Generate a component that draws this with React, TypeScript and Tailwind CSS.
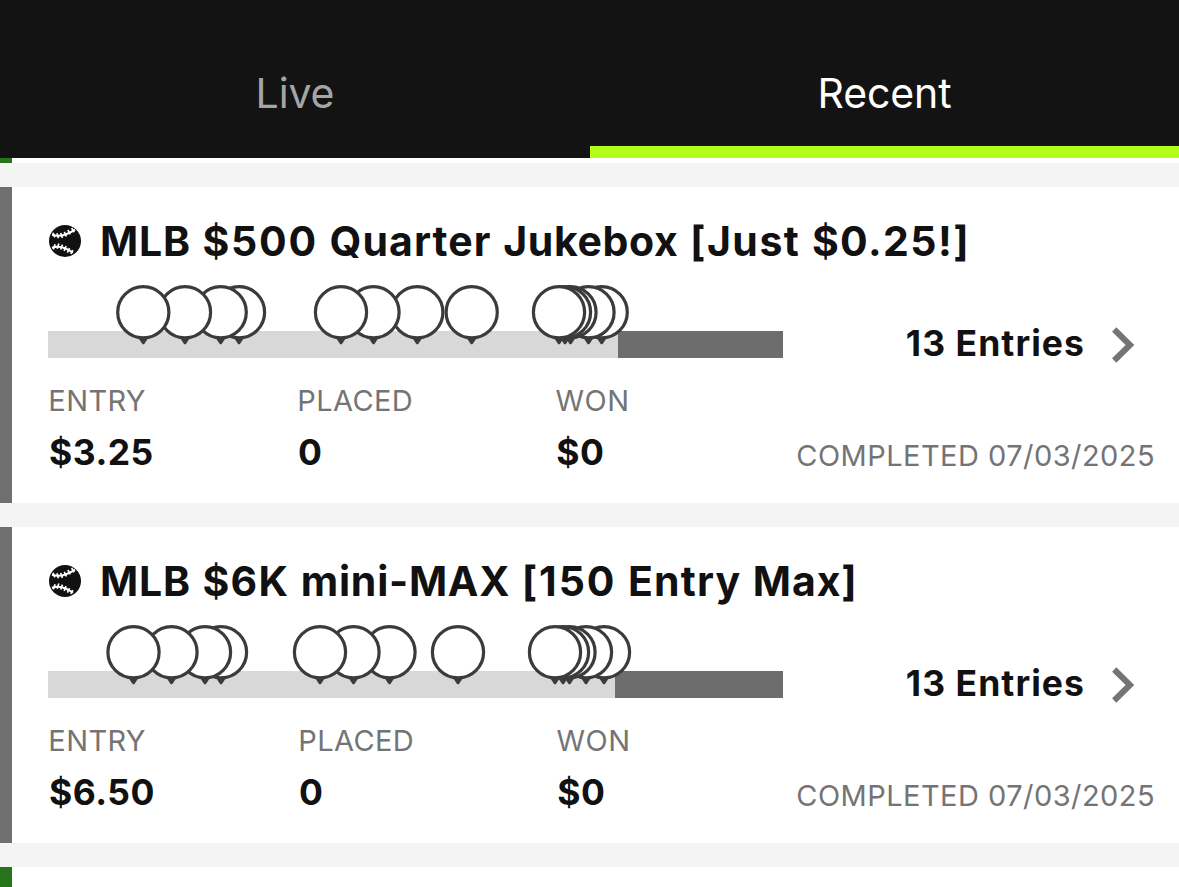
import React from 'react';

type Contest = {
  title: [word: string, tracking: string][];
  cutoff: number;
  pins: number[];
  entry: string;
  columns: string;
};

const contests: Contest[] = [
  {
    title: [
      ['MLB', 'tracking-[0.8px]'],
      ['$500', 'tracking-[1.8px]'],
      ['Quarter', 'tracking-[1.1px]'],
      ['Jukebox', 'tracking-[0.65px]'],
      ['[Just', 'tracking-[1.5px]'],
      ['$0.25!]', 'tracking-[1.4px]'],
    ],
    cutoff: 570,
    pins: [95.3, 137, 172.7, 191, 293, 325.5, 369.3, 423.7, 511, 517, 522.5, 540.5, 553.7],
    entry: '$3.25',
    columns: 'grid-cols-[249px_258.3px_1fr]',
  },
  {
    title: [
      ['MLB', 'tracking-[0.8px]'],
      ['$6K', 'tracking-[1.3px]'],
      ['mini-MAX', 'tracking-[0.75px]'],
      ['[150', 'tracking-[1.9px]'],
      ['Entry', 'tracking-[1.2px]'],
      ['Max]', 'tracking-[0.9px]'],
    ],
    cutoff: 567,
    pins: [85.5, 123.5, 157, 173, 272, 305.5, 341.5, 410, 507, 515, 521.5, 538, 556],
    entry: '$6.50',
    columns: 'grid-cols-[250px_258.3px_1fr]',
  },
];

function Baseball() {
  return (
    <svg className="ml-px h-8 w-8 shrink-0" viewBox="0 0 32 32" fill="none">
      <circle cx="16" cy="16" r="16" fill="#111" />
      <g stroke="#fff">
        <path d="M3 9.8C10 12.2 18 10 26 4.6" strokeWidth="2" />
        <path d="M3 22.8C10 20 17 22.8 24 27.6" strokeWidth="2" />
        <path
          d="M4 7.8l1.8 4.6M8 8.2l1.4 5M11.7 8l1.7 4.9M15.3 6.8l2 4.7M18.9 5l2.3 4.4M22.6 3l2.6 4.2M6.1 19.2l-1.8 5.2M9.8 18.6l-1.6 5.1M13.5 19.6l-1.8 4.9M17.1 21.2l-2 4.6M20.5 23.2l-2.1 4.4M23.8 25.1l-2 3.8"
          strokeWidth="1.7"
        />
      </g>
    </svg>
  );
}

function Standings({ cutoff, pins }: { cutoff: number; pins: number[] }) {
  return (
    <svg className="block h-[73px] w-[735px]" viewBox="0 0 735 73">
      <rect y="46" width="735" height="27" fill="#6d6d6d" />
      <rect y="46" width={cutoff} height="27" fill="#d8d8d8" />
      {[...pins].reverse().map((x) => (
        <g key={x} transform={`translate(${x} 27.2)`}>
          <path d="M-4.8 26H4.8L1.3 31.2Q0 33 -1.3 31.2Z" fill="#3b3b3b" />
          <circle r="25.6" fill="#fff" stroke="#3b3b3b" strokeWidth="3.2" />
        </g>
      ))}
    </svg>
  );
}

function Stat({ label, value }: { label: string; value: string }) {
  return (
    <div>
      <div className="text-[29px] leading-[30px] tracking-[0.4px] text-[#747474]">{label}</div>
      <div className="mt-[18.5px] pl-[0.7px] text-[35.5px] leading-[36px] font-bold tracking-[0.5px]">{value}</div>
    </div>
  );
}

function ContestCard({ contest }: { contest: Contest }) {
  return (
    <article className="h-[316px] border-l-[12px] border-[#706f6f] bg-white pt-[33px] pl-9">
      <div className="flex h-[42px] items-center gap-[19px]">
        <Baseball />
        <h2 className="text-[41px] leading-[42px] font-bold tracking-[1.8px] whitespace-nowrap">
          {contest.title.map(([word, tracking], i) => (
            <React.Fragment key={word}>
              {i > 0 && ' '}
              <span className={tracking}>{word}</span>
            </React.Fragment>
          ))}
        </h2>
      </div>
      <div className="mt-[23px] flex">
        <div className="w-[735px] shrink-0">
          <Standings cutoff={contest.cutoff} pins={contest.pins} />
          <div className={`mt-[28px] ml-[0.3px] grid ${contest.columns}`}>
            <Stat label="ENTRY" value={contest.entry} />
            <Stat label="PLACED" value="0" />
            <Stat label="WON" value="$0" />
          </div>
        </div>
        <div className="flex flex-1 flex-col items-end pt-[39px] pr-6">
          <div className="flex items-center gap-[27px] pr-[20px]">
            <span className="text-[35.5px] leading-[36px] font-bold tracking-[1.05px] whitespace-nowrap">
              13 Entries
            </span>
            <svg className="mt-[3px] h-9 w-[23px]" viewBox="0 0 23 36" fill="none">
              <path d="M2.2 2.5L18 18L2.2 33.5" stroke="#747474" strokeWidth="6" />
            </svg>
          </div>
          <div className="mt-[78px] text-[29px] leading-[30px] tracking-[0.45px] whitespace-nowrap text-[#747474]">
            COMPLETED 07/03/2025
          </div>
        </div>
      </div>
    </article>
  );
}

export default function App() {
  return (
    <div className="h-[887px] w-[1179px] overflow-hidden bg-[#f4f4f4] font-['Inter',sans-serif] text-[#111]">
      <header className="grid h-[158px] grid-cols-[590px_589px] bg-[#131313] text-[41px] leading-[42px] tracking-[-0.1px]">
        <div className="pt-[72px] text-center text-[#a5a5a5]">Live</div>
        <div className="border-b-[12px] border-[#b2ff1a] pt-[72px] text-center text-white">Recent</div>
      </header>
      <main className="flex flex-col gap-6">
        <div className="h-[5px] border-l-[12px] border-[#26751a] bg-white" />
        {contests.map((contest) => (
          <ContestCard key={contest.entry} contest={contest} />
        ))}
        <div className="h-5 border-l-[12px] border-[#26751a] bg-white" />
      </main>
    </div>
  );
}
